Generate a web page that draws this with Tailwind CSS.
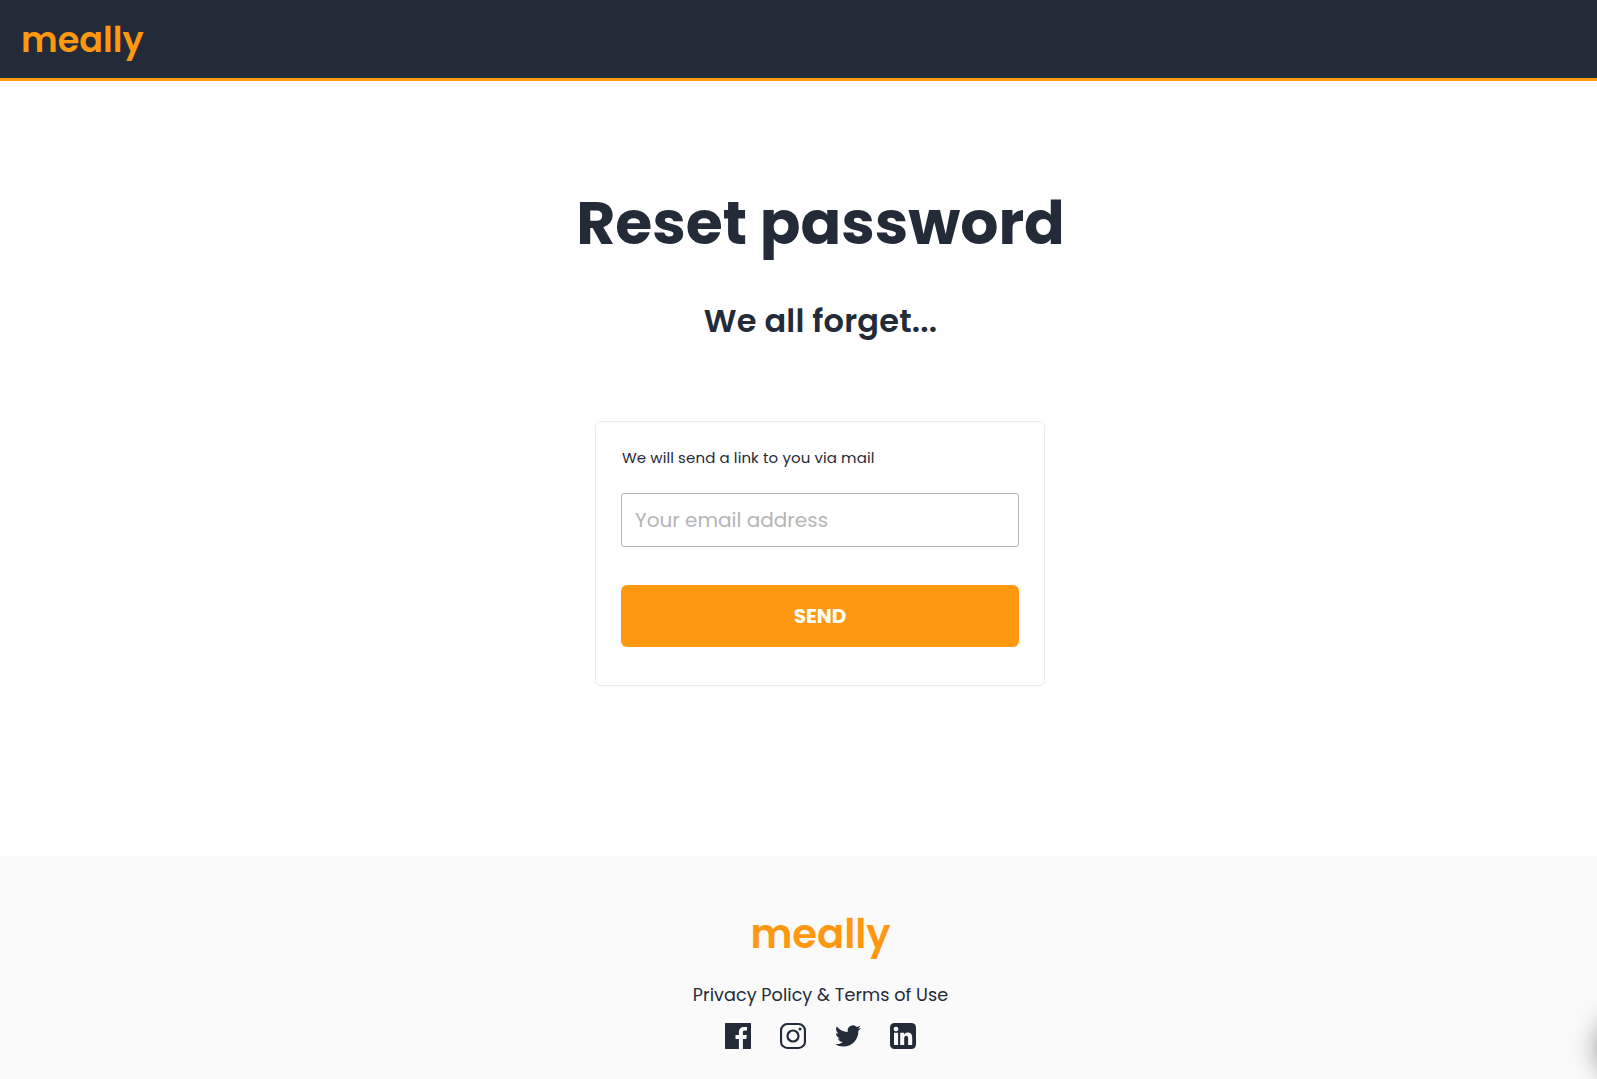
<!DOCTYPE html>
<html lang="en">
<head>
  <meta charset="UTF-8">
  <meta name="viewport" content="width=device-width, initial-scale=1.0">
  <title>meally - Reset password</title>
  <script src="https://cdn.jsdelivr.net/npm/@tailwindcss/browser@4"></script>
</head>
<body class="relative flex flex-col h-[1079px] overflow-hidden bg-white text-[#242b38] font-[Poppins,Inter,sans-serif]">
  <!-- Header -->
  <header class="flex items-center h-[81px] shrink-0 pl-[21px] pt-px bg-[#242b38] border-b-3 border-[#ff9811]">
    <a href="#" class="text-[35px] leading-[54px] font-semibold text-[#ff9811]">meally</a>
  </header>

  <main class="flex flex-col items-center pl-[43px] pt-[97px]">
    <h1 class="pl-px text-[60px] leading-[90px] font-bold whitespace-nowrap">Reset password</h1>
    <h2 class="mt-7 pl-px text-[32px] leading-[50px] tracking-[0.2px] font-semibold whitespace-nowrap">We all forget...</h2>

    <form class="mt-[75px] w-[450px] h-[265px] px-[25px] pt-[25px] border border-[#e9e9e9] rounded-md">
      <p class="pl-px text-[15px] leading-[22px] tracking-[0.1px] whitespace-nowrap">We will send a link to you via mail</p>
      <input type="email" placeholder="Your email address" class="block mt-6 w-full h-[54px] px-[13px] border border-[#b5b5b5] rounded-[3px] text-xl placeholder:text-[#b5b5b5]">
      <button type="button" class="block mt-[38px] w-full h-[62px] rounded-md bg-[#ff9811] text-white text-xl tracking-[-0.1px] font-bold">SEND</button>
    </form>
  </main>

  <!-- Footer -->
  <footer class="flex flex-col items-center mt-[170px] h-[223px] shrink-0 pl-11 pt-12 bg-[#fafafa]">
    <a href="#" class="text-[40px] leading-[60px] font-semibold text-[#ff9811]">meally</a>
    <a href="#" class="mt-[18px] text-[17.6px] leading-[26px] tracking-[0.05px] whitespace-nowrap">Privacy Policy &amp; Terms of Use</a>
    <div class="flex gap-[29px] mt-[15px]">
      <svg class="size-[26px]" viewBox="0 0 26 26" fill="currentColor"><path d="M.7 0h24.600a.7.7 0 0 1 .7.7v24.600a.7.7 0 0 1-.7.7H17.900V15.900h3.400l.5-3.900h-3.900V9.500c0-1.200.4-1.900 2-1.900h2.100V4.100c-.4-.1-1.600-.2-3-.2-3 0-5.100 1.800-5.100 5.100v3h-3.400v3.900h3.400V26H.7a.7.7 0 0 1-.7-.7V.7A.7.7 0 0 1 .7 0z"/></svg>
      <svg class="size-[26px]" viewBox="0 0 26 26" fill="none" stroke="currentColor"><rect x="1.050" y="1.050" width="23.900" height="23.900" rx="6.300" stroke-width="2.100"/><circle cx="13" cy="13" r="5.500" stroke-width="2.200"/><circle cx="20" cy="6" r="1.500" fill="currentColor" stroke="none"/></svg>
      <svg class="size-[26px]" viewBox="0 0 24 24" fill="currentColor"><path d="M23.950 4.570a10 10 0 0 1-2.820.77 4.960 4.960 0 0 0 2.160-2.720c-.95.55-2 .95-3.130 1.180a4.920 4.920 0 0 0-8.380 4.480C7.690 8.090 4.070 6.130 1.640 3.160a4.820 4.820 0 0 0-.67 2.480c0 1.710.87 3.210 2.190 4.100a4.900 4.900 0 0 1-2.230-.62v.06a4.920 4.920 0 0 0 3.950 4.830 5 5 0 0 1-2.210.08 4.940 4.940 0 0 0 4.600 3.420A9.870 9.870 0 0 1 0 19.540a13.990 13.990 0 0 0 7.560 2.210c9.050 0 14-7.500 14-13.980 0-.21 0-.42-.02-.63a9.940 9.940 0 0 0 2.410-2.570z"/></svg>
      <svg class="size-[26px]" viewBox="0 0 26 26"><rect width="26" height="26" rx="4.500" fill="currentColor"/><g fill="#fafafa"><circle cx="6" cy="6.100" r="2.400"/><path d="M4 9.800h4.100v12.200H4zM10.200 9.800H14v1.700c.7-1.200 2-2 3.700-2 3.300 0 4.500 2.200 4.500 5.300v7.200h-4.100v-6.500c0-1.500-.3-2.700-1.800-2.700-1.500 0-2.100 1.200-2.100 2.700V22h-4z"/></g></svg>
    </div>
  </footer>

  <!-- Floating button parked just past the right edge, only its shadow shows -->
  <div class="absolute left-[1599px] top-[1018px] size-[60px] rounded-full shadow-[0_0_28px_rgba(0,0,0,0.5)]"></div>
</body>
</html>
